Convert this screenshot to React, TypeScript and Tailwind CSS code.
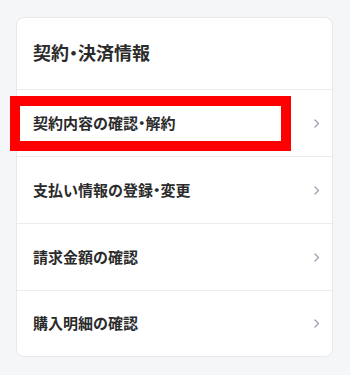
const items = [
  "契約内容の確認・解約",
  "支払い情報の登録・変更",
  "請求金額の確認",
  "購入明細の確認",
];

// The middle dot is set proportionally in the reference, the rest stays full width.
function Label({ text }: { text: string }) {
  const parts = text.split("・");
  return (
    <>
      {parts.map((p, i) => (
        <span key={i}>
          {i > 0 && <span className="[font-feature-settings:'palt']">・</span>}
          {p}
        </span>
      ))}
    </>
  );
}

function Chevron() {
  return (
    <svg width="6" height="9" viewBox="0 0 6 9" fill="none" className="shrink-0">
      <path d="M1 1l3.5 3.5L1 8" stroke="#9ca3af" strokeWidth="1.4" strokeLinecap="round" strokeLinejoin="round" />
    </svg>
  );
}

export default function App() {
  return (
    <div
      className="relative h-[375px] w-[350px] bg-[#f5f6f8] pt-[17px]"
      style={{ fontFamily: '"Noto Sans CJK JP", "Noto Sans", sans-serif' }}
    >
      <div className="ml-4 w-[317px] overflow-hidden rounded-lg border border-[#e8e9ec] bg-white">
        <div className="flex h-[71px] items-center px-4 pb-[2px]">
          <h2 className="text-[18px] font-bold text-[#2b2b2b]">
            <Label text="契約・決済情報" />
          </h2>
        </div>
        {items.map((label, i) => (
          <div
            key={label}
            className={`flex items-center justify-between border-t border-[#ececef] pl-4 pr-[12px] ${
              i === 3 ? "h-[66px]" : "h-[67px]"
            }`}
          >
            <span className="text-[15px] font-bold text-[#2b2b2b]">
              <Label text={label} />
            </span>
            <Chevron />
          </div>
        ))}
      </div>

      {/* annotation box over the first row */}
      <div className="pointer-events-none absolute left-[10px] top-[96px] h-[55px] w-[281px] border-[10px] border-[#ff0000]" />
    </div>
  );
}
